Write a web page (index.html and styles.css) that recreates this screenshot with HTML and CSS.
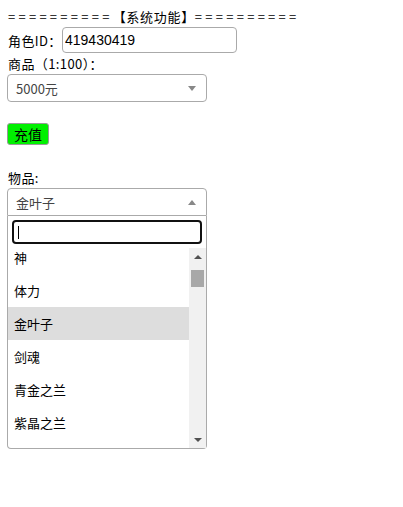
FILE: index.html
```html
<!DOCTYPE html>
<html lang="zh-CN">
<head>
    <meta charset="UTF-8">
    <title>系统功能</title>
    <link rel="stylesheet" href="styles.css">
</head>
<body>
    <div class="title"><span class="eq">==========</span>【系统功能】<span class="eq">==========</span></div>

    <div class="row">
        <label>角色ID：</label>
        <input class="text-input" type="text" value="419430419">
    </div>

    <div class="label">商品（1:100）：</div>
    <div class="s2 s2-closed">
        <span class="s2-text">5000元</span>
        <span class="s2-arrow down"></span>
    </div>

    <button class="btn-pay">充值</button>

    <div class="label item-label">物品:</div>
    <div class="s2 s2-open">
        <span class="s2-text">金叶子</span>
        <span class="s2-arrow up"></span>
    </div>
    <div class="s2-dropdown">
        <div class="s2-search"><input type="text" class="s2-search-field"><span class="caret"></span></div>
        <div class="s2-results">
            <ul class="s2-list">
                <li>神</li>
                <li>体力</li>
                <li class="active">金叶子</li>
                <li>剑魂</li>
                <li>青金之兰</li>
                <li>紫晶之兰</li>
            </ul>
            <div class="scrollbar">
                <span class="sb-btn"><span class="tri up-dark"></span></span>
                <div class="sb-track"><div class="sb-thumb"></div></div>
                <span class="sb-btn"><span class="tri down-dark"></span></span>
            </div>
        </div>
    </div>
</body>
</html>
```

FILE: styles.css
```css
* {
    box-sizing: border-box;
}

body {
    margin: 8px 7px;
    font-family: "Noto Sans CJK SC", "Liberation Sans", sans-serif;
    font-size: 13px;
    color: #000;
}

.title {
    line-height: 18px;
    letter-spacing: 0.7px;
    padding-left: 1px;
}

.title .eq {
    letter-spacing: 3.25px;
}

.row {
    display: flex;
    align-items: center;
    margin-top: 1px;
}

.row label {
    padding-left: 1px;
    width: 55px;
    letter-spacing: 0.4px;
}

.text-input {
    width: 175px;
    height: 26px;
    border: 1px solid #aaa;
    border-radius: 4px;
    padding: 0 2px;
    font-family: "Liberation Sans", sans-serif;
    font-size: 14px;
    color: #000;
}

.label {
    padding-left: 1px;
    line-height: 20px;
    margin-top: 1px;
    letter-spacing: 0.4px;
}

.s2 {
    width: 200px;
    height: 28px;
    border: 1px solid #aaa;
    border-radius: 4px;
    display: flex;
    align-items: center;
    justify-content: space-between;
    padding: 0 8px;
    color: #444;
    font-size: 13px;
}

.s2-open {
    border-radius: 4px 4px 0 0;
}

.s2-arrow {
    width: 0;
    height: 0;
    border-left: 4px solid transparent;
    border-right: 4px solid transparent;
    margin-right: 2px;
}

.s2-arrow.down {
    border-top: 5px solid #888;
}

.s2-arrow.up {
    border-bottom: 5px solid #888;
}

.btn-pay {
    display: block;
    margin-top: 21px;
    height: 22px;
    padding: 0 6px;
    background: #00f000;
    border: 1px solid #999;
    border-radius: 3px;
    font-family: inherit;
    font-size: 14px;
    color: #000;
}

.item-label {
    margin-top: 23px;
}

.s2-dropdown {
    width: 200px;
    border: 1px solid #aaa;
    border-top: none;
    border-radius: 0 0 4px 4px;
}

.s2-search {
    padding: 4px;
    position: relative;
}

.s2-search-field {
    display: block;
    width: 100%;
    height: 24px;
    border: 2px solid #111;
    border-radius: 4px;
    outline: none;
}

.caret {
    position: absolute;
    left: 10px;
    top: 10px;
    width: 1px;
    height: 13px;
    background: #000;
}

.s2-results {
    display: flex;
    height: 200px;
    overflow: hidden;
}

.s2-list {
    flex: 1;
    list-style: none;
    margin: -7px 0 0;
    padding: 0;
}

.s2-list li {
    height: 33px;
    line-height: 33px;
    padding-left: 6px;
    color: #000;
}

.s2-list li.active {
    background: #ddd;
}

.scrollbar {
    width: 17px;
    background: #f1f1f1;
    display: flex;
    flex-direction: column;
}

.sb-btn {
    height: 17px;
    display: flex;
    align-items: center;
    justify-content: center;
}

.sb-track {
    flex: 1;
    padding: 5px 2px 0;
}

.sb-thumb {
    height: 17px;
    background: #a8a8a8;
}

.tri {
    width: 0;
    height: 0;
    border-left: 4px solid transparent;
    border-right: 4px solid transparent;
}

.tri.up-dark {
    border-bottom: 4px solid #505050;
}

.tri.down-dark {
    border-top: 4px solid #505050;
}
```
